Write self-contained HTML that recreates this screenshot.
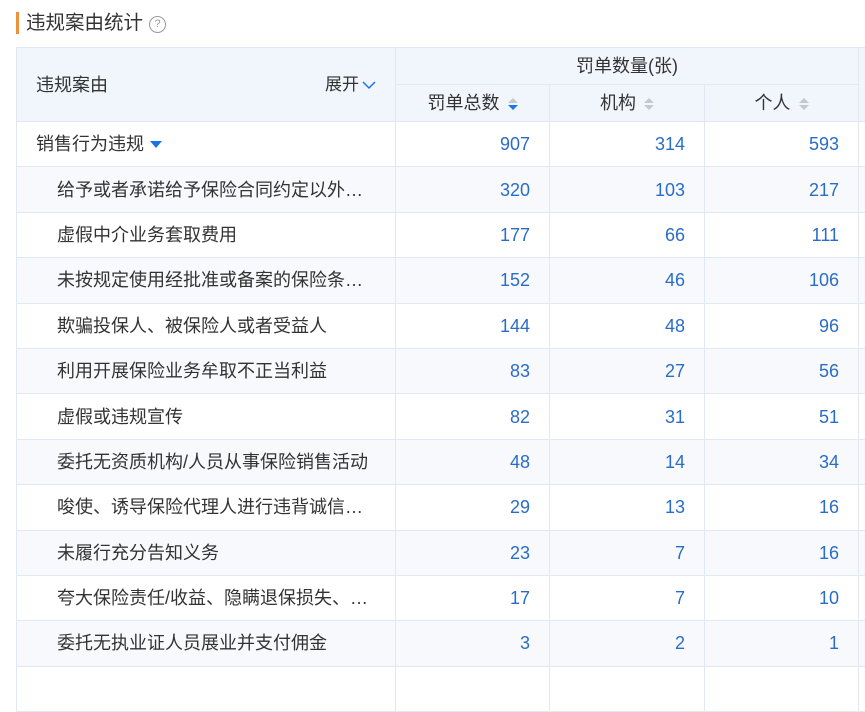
<!DOCTYPE html>
<html><head><meta charset="utf-8"><style>
body{margin:0;width:865px;height:668px;overflow:hidden;background:#fff;font-family:"Liberation Sans","Noto Sans CJK SC",sans-serif;color:#333;}
.title{position:absolute;left:16px;top:12px;height:22px;border-left:3px solid #f0913a;padding-left:7px;font-size:19.5px;line-height:22px;color:#333}
.q{display:inline-block;width:15px;height:15px;border:1.3px solid #999;border-radius:50%;font-size:11px;line-height:15px;text-align:center;color:#999;vertical-align:2px;margin-left:6px}
table{position:absolute;left:16px;top:47px;width:849px;border-collapse:collapse;table-layout:fixed;font-size:18px}
td,th{border:1px solid #e2e8f1;padding:0;font-weight:normal;overflow:hidden;white-space:nowrap;line-height:20px;vertical-align:middle}
th{background:#f1f6fc;color:#333;font-size:18px}
tr.r td{height:44.4px}
td.n{text-align:right;padding-right:19px;color:#2a6cc9;font-size:18px}
td.l{padding-left:40px}
tr.t td{background:#f7f9fc}
.tri{display:inline-block;width:0;height:0;border-left:6px solid transparent;border-right:6px solid transparent;border-top:7px solid #1a73e8;margin-left:6px;vertical-align:2px}
.s{display:inline-block;margin-left:8px;vertical-align:-1px;line-height:0}
.s i{display:block;width:0;height:0;border-left:5px solid transparent;border-right:5px solid transparent}
.s .u{border-bottom:5px solid #c4c8cf;margin-bottom:2px}.s .d{border-top:5px solid #c4c8cf}
.s .d.b{border-top-color:#1a73e8}
</style></head><body>
<div class="title">违规案由统计<span class="q">?</span></div>
<table>
<colgroup><col style="width:379px"><col style="width:154px"><col style="width:155px"><col style="width:154px"><col style="width:7px"></colgroup>
<tr><th rowspan="2" style="height:73px;text-align:left;padding-left:19px">违规案由<span style="float:right;margin-right:19px;font-size:17px">展开<svg width="14" height="10" viewBox="0 0 14 10" style="margin-left:3px"><path d="M1 2l6 6 6-6" fill="none" stroke="#1a73e8" stroke-width="1.5"/></svg></span></th>
<th colspan="3" style="height:36px">罚单数量(张)</th><th rowspan="2" style="border-right:none"></th></tr>
<tr><th style="height:36px">罚单总数<span class="s"><i class="u"></i><i class="d b"></i></span></th><th>机构<span class="s"><i class="u"></i><i class="d"></i></span></th><th>个人<span class="s"><i class="u"></i><i class="d"></i></span></th></tr>
<tr class="r"><td style="padding-left:19px">销售行为违规<span class="tri"></span></td><td class="n">907</td><td class="n">314</td><td class="n">593</td><td></td></tr>
<tr class="r t"><td class="l">给予或者承诺给予保险合同约定以外…</td><td class="n">320</td><td class="n">103</td><td class="n">217</td><td></td></tr>
<tr class="r"><td class="l">虚假中介业务套取费用</td><td class="n">177</td><td class="n">66</td><td class="n">111</td><td></td></tr>
<tr class="r t"><td class="l">未按规定使用经批准或备案的保险条…</td><td class="n">152</td><td class="n">46</td><td class="n">106</td><td></td></tr>
<tr class="r"><td class="l">欺骗投保人、被保险人或者受益人</td><td class="n">144</td><td class="n">48</td><td class="n">96</td><td></td></tr>
<tr class="r t"><td class="l">利用开展保险业务牟取不正当利益</td><td class="n">83</td><td class="n">27</td><td class="n">56</td><td></td></tr>
<tr class="r"><td class="l">虚假或违规宣传</td><td class="n">82</td><td class="n">31</td><td class="n">51</td><td></td></tr>
<tr class="r t"><td class="l">委托无资质机构/人员从事保险销售活动</td><td class="n">48</td><td class="n">14</td><td class="n">34</td><td></td></tr>
<tr class="r"><td class="l">唆使、诱导保险代理人进行违背诚信…</td><td class="n">29</td><td class="n">13</td><td class="n">16</td><td></td></tr>
<tr class="r t"><td class="l">未履行充分告知义务</td><td class="n">23</td><td class="n">7</td><td class="n">16</td><td></td></tr>
<tr class="r"><td class="l">夸大保险责任/收益、隐瞒退保损失、…</td><td class="n">17</td><td class="n">7</td><td class="n">10</td><td></td></tr>
<tr class="r t"><td class="l">委托无执业证人员展业并支付佣金</td><td class="n">3</td><td class="n">2</td><td class="n">1</td><td></td></tr>
<tr class="r"><td class="l"></td><td class="n"></td><td class="n"></td><td class="n"></td><td></td></tr>
</table>
</body></html>
